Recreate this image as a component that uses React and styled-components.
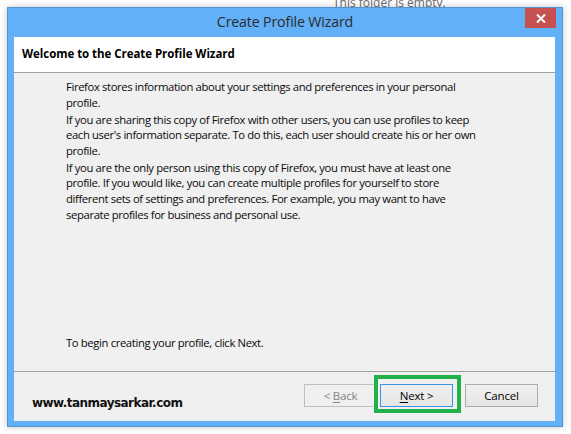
import styled, { createGlobalStyle } from 'styled-components'

const GlobalStyle = createGlobalStyle`
  html, body {
    margin: 0;
    padding: 0;
    background: #ffffff;
  }
  body {
    font-family: 'Open Sans', 'Noto Sans', sans-serif;
  }
`

const Desktop = styled.div`
  position: relative;
  width: 571px;
  height: 434px;
  overflow: hidden;
  background: #ffffff;
  padding: 7px 0 0 7px;
  box-sizing: border-box;
`

// explorer text peeking out behind the dialog
const BehindText = styled.div`
  position: absolute;
  left: 333px;
  top: -6px;
  font-size: 12px;
  color: #6b6b6b;
`

const Window = styled.div`
  position: relative;
  width: 556px;
  height: 420px;
  box-sizing: border-box;
  background: #62b0f7;
  border: 1px solid #4f95d6;
  box-shadow: 0 0 7px rgba(0, 0, 0, 0.22);
  display: flex;
  flex-direction: column;
`

const TitleBar = styled.div`
  height: 29px;
  display: grid;
  grid-template-columns: 1fr auto 1fr;
  align-items: start;
`

const Title = styled.div`
  grid-column: 2;
  padding-top: 4px;
  font-family: 'Open Sans', sans-serif;
  font-size: 14.2px;
  color: #2b2b2b;
  letter-spacing: -0.15px;
`

const CloseButton = styled.div`
  grid-column: 3;
  justify-self: end;
  margin-right: 6px;
  width: 31px;
  height: 20px;
  background: #c75050;
  display: flex;
  align-items: center;
  justify-content: center;
`

const Client = styled.div`
  flex: 1;
  margin: 0 7px 5px 6px;
  background: #f0f0f0;
  display: flex;
  flex-direction: column;
`

const Header = styled.div`
  height: 36px;
  background: #ffffff;
  border-bottom: 1px solid #a0a0a0;
  display: flex;
  align-items: center;
  padding-left: 8px;
  padding-bottom: 2px;
  box-sizing: border-box;
  font-family: 'Open Sans', sans-serif;
  font-weight: 700;
  font-size: 11.5px;
  color: #000;
  letter-spacing: -0.05px;
`

const Body = styled.div`
  flex: 1;
  padding: 6px 0 19px 52px;
  display: flex;
  flex-direction: column;
  border-bottom: 1px solid #a0a0a0;
  font-family: 'Open Sans', sans-serif;
  font-size: 11.3px;
  line-height: 15.6px;
  color: #0a0a0a;
  letter-spacing: -0.38px;
`

const Para = styled.p`
  margin: 0 0 1.4px 0;
  ${p => p.$bottom && 'margin-top: auto;'}
`

const Footer = styled.div`
  height: 49px;
  display: flex;
  align-items: flex-start;
  padding: 12px 17px 0 18px;
  box-sizing: border-box;
`

const Watermark = styled.div`
  margin-top: 12px;
  font-family: 'DejaVu Sans', Verdana, sans-serif;
  font-weight: 700;
  font-size: 12px;
  color: #111;
  letter-spacing: -0.55px;
`

const Buttons = styled.div`
  margin-left: auto;
  display: flex;
  align-items: center;
`

const Button = styled.div`
  width: ${p => p.$w || 73}px;
  height: 23px;
  box-sizing: border-box;
  margin-left: ${p => p.$gap || 0}px;
  display: flex;
  align-items: center;
  justify-content: center;
  font-family: 'Open Sans', sans-serif;
  font-size: 11.5px;
  letter-spacing: -0.2px;
  color: ${p => (p.$disabled ? '#838383' : '#000')};
  border: 1px solid ${p => (p.$disabled ? '#bfbfbf' : p.$focus ? '#3c93e6' : '#adadad')};
  background: ${p => (p.$disabled ? '#efefef' : 'linear-gradient(#f0f0f0, #e5e5e5)')};
  u {
    text-decoration: underline;
    text-underline-offset: 2px;
  }
`

const Highlight = styled.div`
  position: relative;
  margin-left: 3px;
  &::after {
    content: '';
    position: absolute;
    left: -6px;
    right: -8px;
    top: -9px;
    bottom: -6px;
    border: 4px solid #22b04b;
  }
`

export default function App () {
  return (
    <>
      <GlobalStyle />
      <Desktop>
        <BehindText>This folder is empty.</BehindText>
        <Window>
          <TitleBar>
            <Title>Create Profile Wizard</Title>
            <CloseButton>
              <svg width='10' height='9' viewBox='0 0 10 9'>
                <path d='M1 0.5 L9 8.5 M9 0.5 L1 8.5' stroke='#fff' strokeWidth='2' />
              </svg>
            </CloseButton>
          </TitleBar>
          <Client>
            <Header>Welcome to the Create Profile Wizard</Header>
            <Body>
              <Para>
                Firefox stores information about your settings and preferences in your personal<br />
                profile.
              </Para>
              <Para>
                If you are sharing this copy of Firefox with other users, you can use profiles to keep<br />
                each user's information separate. To do this, each user should create his or her own<br />
                profile.
              </Para>
              <Para>
                If you are the only person using this copy of Firefox, you must have at least one<br />
                profile. If you would like, you can create multiple profiles for yourself to store<br />
                different sets of settings and preferences. For example, you may want to have<br />
                separate profiles for business and personal use.
              </Para>
              <Para $bottom>To begin creating your profile, click Next.</Para>
            </Body>
            <Footer>
              <Watermark>www.tanmaysarkar.com</Watermark>
              <Buttons>
                <Button $disabled><span>&lt; <u>B</u>ack</span></Button>
                <Highlight>
                  <Button $focus><span><u>N</u>ext &gt;</span></Button>
                </Highlight>
                <Button $gap={12}>Cancel</Button>
              </Buttons>
            </Footer>
          </Client>
        </Window>
      </Desktop>
    </>
  )
}
